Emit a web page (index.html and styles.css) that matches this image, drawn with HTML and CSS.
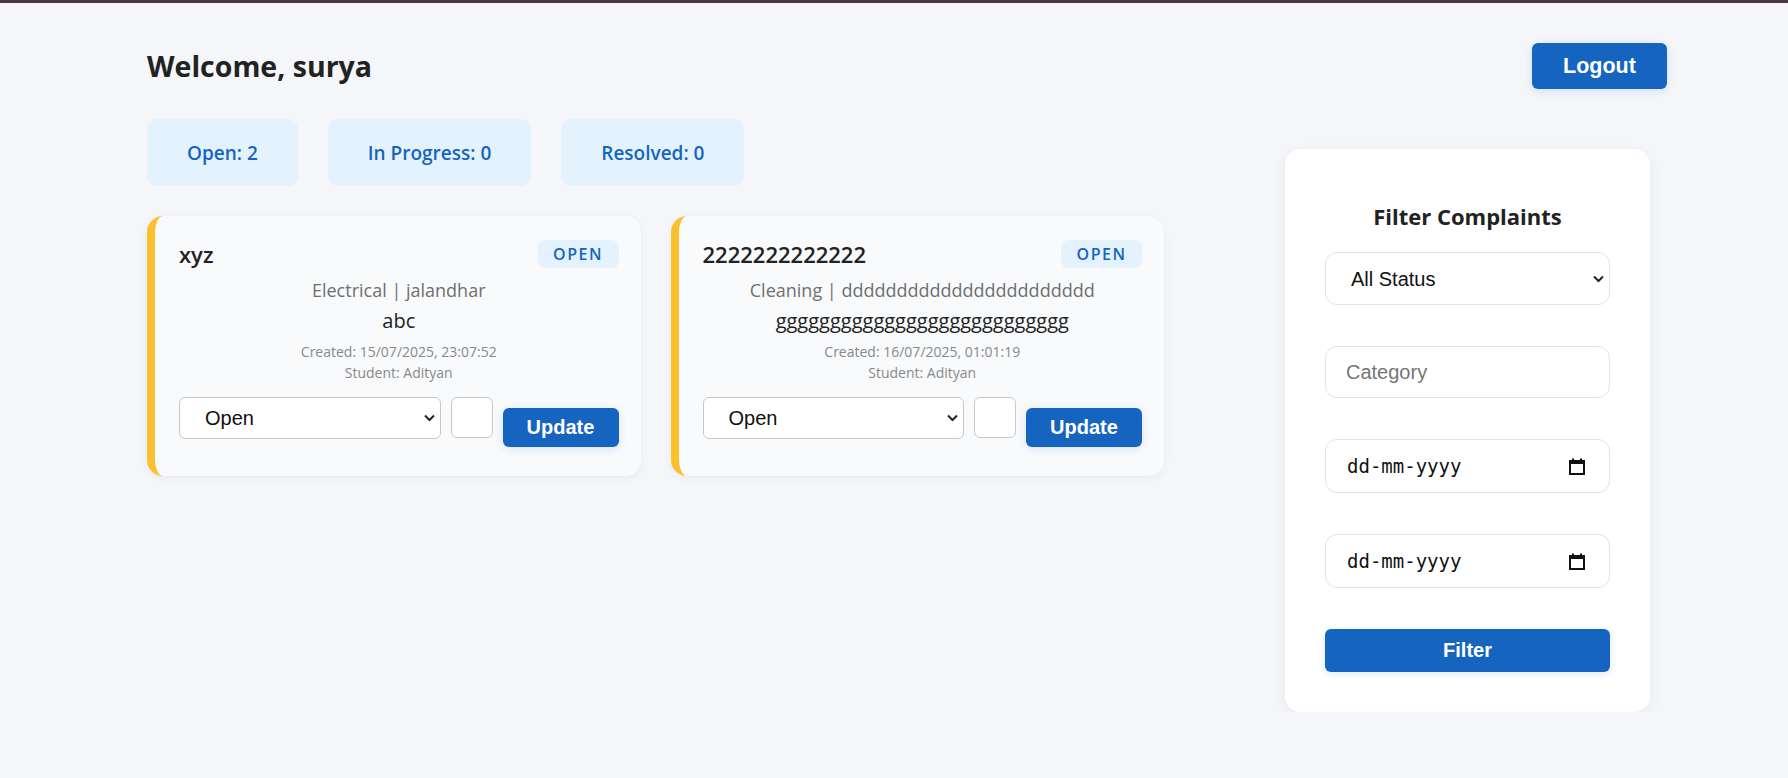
FILE: index.html
```html
<!DOCTYPE html>
<html lang="en">
<head>
<meta charset="utf-8">
<title>Dashboard</title>
<link rel="stylesheet" href="styles.css">
</head>
<body>
<div class="topbar"></div>
<div class="page">
  <header class="header">
    <h1 class="welcome">Welcome, surya</h1>
    <button class="btn btn-logout">Logout</button>
  </header>
  <main class="main">
    <section class="content">
      <div class="stats">
        <div class="stat">Open: 2</div>
        <div class="stat">In Progress: 0</div>
        <div class="stat">Resolved: 0</div>
      </div>
      <div class="cards">
        <article class="card">
          <div class="card-head">
            <h3 class="card-title">xyz</h3>
            <span class="badge">OPEN</span>
          </div>
          <p class="card-cat">Electrical | jalandhar</p>
          <p class="card-desc">abc</p>
          <p class="card-meta">Created: 15/07/2025, 23:07:52</p>
          <p class="card-meta">Student: Adityan</p>
          <div class="card-actions">
            <div class="select-wrap small">
              <select class="card-select"><option>Open</option></select>
              <svg class="chev" width="11" height="7" viewBox="0 0 11 7"><path d="M1 1l4.5 4.5L10 1" fill="none" stroke="#222" stroke-width="2"/></svg>
            </div>
            <input class="card-input" type="text">
            <button class="btn btn-update">Update</button>
          </div>
        </article>
        <article class="card">
          <div class="card-head">
            <h3 class="card-title">2222222222222</h3>
            <span class="badge">OPEN</span>
          </div>
          <p class="card-cat">Cleaning | ddddddddddddddddddddddd</p>
          <p class="card-desc">ggggggggggggggggggggggggggg</p>
          <p class="card-meta">Created: 16/07/2025, 01:01:19</p>
          <p class="card-meta">Student: Adityan</p>
          <div class="card-actions">
            <div class="select-wrap small">
              <select class="card-select"><option>Open</option></select>
              <svg class="chev" width="11" height="7" viewBox="0 0 11 7"><path d="M1 1l4.5 4.5L10 1" fill="none" stroke="#222" stroke-width="2"/></svg>
            </div>
            <input class="card-input" type="text">
            <button class="btn btn-update">Update</button>
          </div>
        </article>
      </div>
    </section>
    <aside class="sidebar">
      <h3 class="filter-title">Filter Complaints</h3>
      <div class="select-wrap big">
        <select class="f-select"><option>All Status</option></select>
        <svg class="chev" width="11" height="7" viewBox="0 0 11 7"><path d="M1 1l4.5 4.5L10 1" fill="none" stroke="#222" stroke-width="2"/></svg>
      </div>
      <input class="f-input" type="text" placeholder="Category">
      <div class="f-date">
        <span class="date-text">dd-mm-yyyy</span>
        <svg class="cal" width="16" height="17" viewBox="0 0 16 17"><rect x="1" y="3" width="14" height="13" fill="none" stroke="#111" stroke-width="2"/><rect x="1" y="3" width="14" height="3" fill="#111"/><rect x="3" y="0.5" width="2" height="3" fill="#111"/><rect x="11" y="0.5" width="2" height="3" fill="#111"/></svg>
      </div>
      <div class="f-date">
        <span class="date-text">dd-mm-yyyy</span>
        <svg class="cal" width="16" height="17" viewBox="0 0 16 17"><rect x="1" y="3" width="14" height="13" fill="none" stroke="#111" stroke-width="2"/><rect x="1" y="3" width="14" height="3" fill="#111"/><rect x="3" y="0.5" width="2" height="3" fill="#111"/><rect x="11" y="0.5" width="2" height="3" fill="#111"/></svg>
      </div>
      <button class="btn btn-filter">Filter</button>
    </aside>
  </main>
</div>
</body>
</html>
```

FILE: styles.css
```css
* { box-sizing: border-box; }

html, body {
  margin: 0;
  background: #f4f6fa;
  font-family: "Open Sans", "Noto Sans", sans-serif;
  color: #222;
}

.topbar {
  height: 3px;
  background: #4a3540;
}

.page {
  padding: 40px 121px 0 147px;
}

.header {
  display: flex;
  justify-content: space-between;
  align-items: center;
  height: 46px;
}

.welcome {
  margin: 0;
  font-size: 28.5px;
  font-weight: 700;
  color: #222;
}

.btn {
  border: none;
  background: #1565c0;
  color: #fff;
  font-family: "Liberation Sans", Arial, sans-serif;
  font-weight: 700;
  border-radius: 6px;
  cursor: pointer;
  box-shadow: 0 2px 8px rgba(21, 101, 192, 0.15);
}

.btn-logout {
  width: 135px;
  height: 46px;
  font-size: 21.5px;
}

.main {
  display: flex;
  justify-content: space-between;
  align-items: flex-start;
  margin-top: 30px;
}

.content {
  flex: 0 0 1017px;
  min-width: 0;
}

.stats {
  display: flex;
  gap: 30px;
}

.stat {
  background: #e3f2fd;
  color: #1565c0;
  border-radius: 10px;
  padding: 0 40px;
  height: 67px;
  display: flex;
  align-items: center;
  font-size: 19px;
  font-weight: 600;
}

.cards {
  display: grid;
  grid-template-columns: 1fr 1fr;
  gap: 30px;
  margin-top: 30px;
}

.card {
  background: #f8fafc;
  border-left: 8px solid #fbc02d;
  border-radius: 16px;
  padding: 24px 22px 29px 24px;
  box-shadow: 0 2px 10px rgba(0, 0, 0, 0.05);
  text-align: center;
  min-width: 0;
}

.card-head {
  display: flex;
  justify-content: space-between;
  align-items: center;
  height: 28px;
}

.card-title {
  margin: 0;
  font-size: 22px;
  font-weight: 600;
  color: #222;
}

.badge {
  background: #e3f2fd;
  color: #1565c0;
  border-radius: 8px;
  height: 28px;
  width: 81px;
  justify-content: center;
  display: flex;
  align-items: center;
  font-size: 16px;
  font-weight: 600;
  letter-spacing: 1.5px;
}

.card-cat {
  margin: 10px 0 0;
  font-size: 18px;
  line-height: 24px;
  color: #6f6f6f;
}

.card-desc {
  margin: 7px 0 0;
  font-size: 20px;
  line-height: 24px;
  color: #222;
}

.card-desc + .card-meta {
  margin-top: 8px;
}

.card-meta {
  margin: 0;
  font-size: 14px;
  line-height: 21px;
  color: #888;
}

.card-actions {
  display: flex;
  gap: 10px;
  align-items: flex-start;
  margin-top: 14px;
}

.select-wrap {
  position: relative;
}

.select-wrap.small {
  flex: 1;
  min-width: 0;
}

.chev {
  position: absolute;
  top: 50%;
  right: 6px;
  transform: translateY(-50%);
  pointer-events: none;
}

select {
  appearance: none;
  -webkit-appearance: none;
  width: 100%;
  background: #fff;
  font-family: "Liberation Sans", Arial, sans-serif;
  font-size: 20px;
  color: #111;
  outline: none;
}

.card-select {
  height: 42px;
  border: 1px solid #c8c8c8;
  border-radius: 6px;
  padding: 0 0 0 25px;
}

.card-input {
  width: 42px;
  height: 41px;
  border: 1px solid #c8c8c8;
  border-radius: 6px;
  background: #fff;
  outline: none;
}

.btn-update {
  width: 116px;
  height: 39px;
  margin-top: 11px;
  font-size: 20px;
}

.sidebar {
  flex: 0 0 365px;
  width: 365px;
  min-width: 0;
  margin-right: 17px;
  margin-top: 30px;
  background: #fff;
  border-radius: 16px;
  padding: 40px;
  box-shadow: 0 4px 16px rgba(0, 0, 0, 0.05);
  display: flex;
  flex-direction: column;
  gap: 41px;
}

.filter-title {
  margin: 14px 0 -18px;
  text-align: center;
  font-size: 22px;
  line-height: 26px;
  font-weight: 700;
  color: #222;
}

.f-select {
  height: 53px;
  border: 1px solid #e3e3e3;
  border-radius: 12px;
  padding: 0 0 0 25px;
}

.f-input {
  width: 100%;
  min-width: 0;
  height: 52px;
  border: 1px solid #e3e3e3;
  border-radius: 12px;
  padding: 0 20px;
  font-family: "Liberation Sans", Arial, sans-serif;
  font-size: 20px;
  outline: none;
}

.f-input::placeholder {
  color: #757575;
}

.f-date {
  height: 54px;
  border: 1px solid #e3e3e3;
  border-radius: 12px;
  padding: 0 24px 0 21px;
  display: flex;
  align-items: center;
  justify-content: space-between;
  background: #fff;
}

.date-text {
  font-family: "DejaVu Sans Mono", "Liberation Mono", monospace;
  font-size: 19px;
  color: #111;
}

.btn-filter {
  height: 43px;
  font-size: 20px;
}
```
